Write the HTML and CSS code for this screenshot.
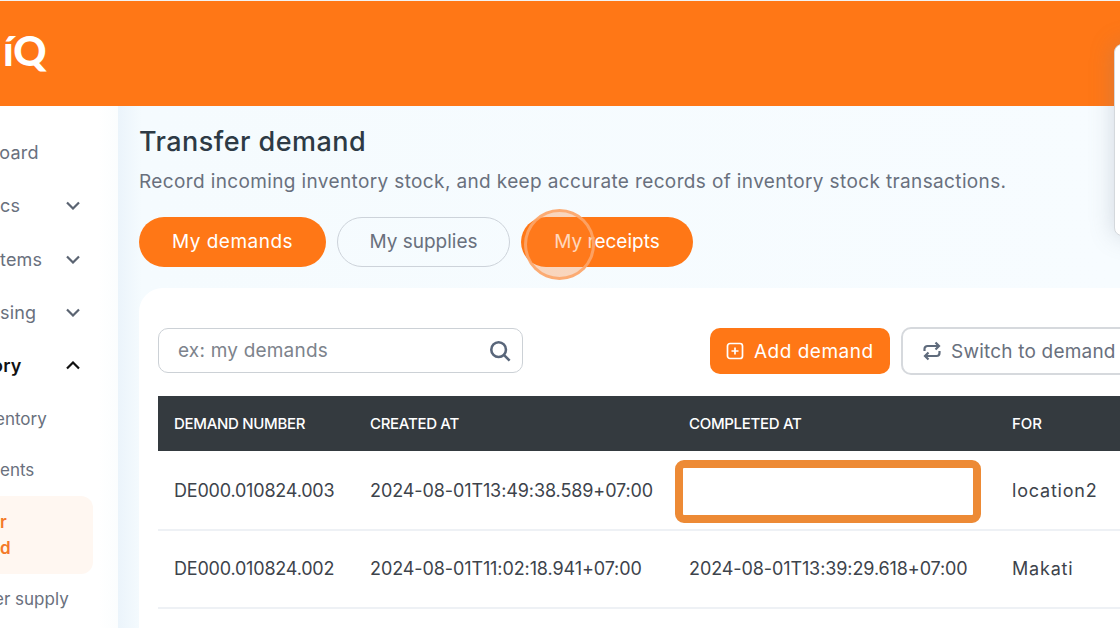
FILE: index.html
```html
<!DOCTYPE html>
<html lang="en">
<head>
<meta charset="utf-8">
<title>Transfer demand</title>
<link rel="stylesheet" href="styles.css">
</head>
<body>
<div class="app">
  <header class="topbar">
    <div class="logo">íQ</div>
  </header>
  <div class="body-row">
    <nav class="sidebar">
      <div class="nav-item"><span class="clip-a">board</span></div>
      <div class="nav-item"><span>cs</span><svg class="chev" viewBox="0 0 14 9"><path d="M1 1.500 7 7.500l6-6"/></svg></div>
      <div class="nav-item"><span>tems</span><svg class="chev" viewBox="0 0 14 9"><path d="M1 1.500 7 7.500l6-6"/></svg></div>
      <div class="nav-item"><span>sing</span><svg class="chev" viewBox="0 0 14 9"><path d="M1 1.500 7 7.500l6-6"/></svg></div>
      <div class="nav-item nav-open"><span class="clip-b">ory</span><svg class="chev" viewBox="0 0 14 9"><path d="M1 7.500 7 1.500l6 6"/></svg></div>
      <div class="sub-item first"><span class="clip-c">entory</span></div>
      <div class="sub-item">ents</div>
      <div class="sub-active">r<br>d</div>
      <div class="sub-item last"><span class="clip-d">er supply</span></div>
    </nav>
    <main class="content">
      <h1 class="title">Transfer demand</h1>
      <p class="subtitle">Record incoming inventory stock, and keep accurate records of inventory stock transactions.</p>
      <div class="tabs">
        <button class="pill pill-on">My demands</button>
        <button class="pill pill-off">My supplies</button>
        <button class="pill pill-on pill-hl">My receipts<span class="ripple"></span></button>
      </div>
      <section class="card">
        <div class="toolbar">
          <div class="search">
            <span class="placeholder">ex: my demands</span>
            <svg class="search-ico" viewBox="0 0 24 24"><circle cx="10.500" cy="10.500" r="8"/><path d="M16.500 16.500l6 6"/></svg>
          </div>
          <div class="actions">
            <button class="btn btn-add"><svg class="ico" viewBox="0 0 18 18"><rect x="1.500" y="1.500" width="15" height="15" rx="2.500"/><path d="M9 5.500v7M5.500 9h7"/></svg>Add demand</button>
            <button class="btn btn-switch"><svg class="ico" viewBox="0 0 20 20"><path d="M2.500 10V8a3 3 0 0 1 3-3h11M13.500 1.500 17 5l-3.500 3.500M17.500 10v2a3 3 0 0 1-3 3h-11M6.500 11.500 3 15l3.500 3.500"/></svg>Switch to demand</button>
          </div>
        </div>
        <div class="table">
          <div class="row head"><div class="c1">DEMAND NUMBER</div><div class="c2">CREATED AT</div><div class="c3">COMPLETED AT</div><div class="c4">FOR</div></div>
          <div class="row"><div class="c1">DE000.010824.003</div><div class="c2">2024-08-01T13:49:38.589+07:00</div><div class="c3"></div><div class="c4">location2</div><span class="highlight"></span></div>
          <div class="row"><div class="c1">DE000.010824.002</div><div class="c2">2024-08-01T11:02:18.941+07:00</div><div class="c3">2024-08-01T13:39:29.618+07:00</div><div class="c4">Makati</div></div>
        </div>
      </section>
    </main>
  </div>
  <div class="popover"></div>
</div>
</body>
</html>
```
FILE: styles.css
```css
* { box-sizing: border-box; }
html, body { margin: 0; padding: 0; }
body { width: 1120px; height: 628px; overflow: hidden; font-family: "Inter", "Open Sans", sans-serif; background: #fff; }
button { font-family: inherit; cursor: pointer; }
.app { position: relative; width: 1120px; height: 628px; overflow: hidden; display: flex; flex-direction: column; }
.topbar { height: 106px; flex: none; background: #ff7716; border-top: 1px solid #f2f2f2; display: flex; align-items: center; }
.logo { color: #fff; font-family: "Lato", sans-serif; font-weight: 900; font-size: 41px; line-height: 1; margin: -6px 0 0 3px; }
.body-row { flex: 1; display: flex; min-height: 0; }
.sidebar { width: 118px; flex: none; background: linear-gradient(90deg, #fff 98px, #fbfdfe 100%); color: #69707d; font-size: 18px; padding-top: 19.600px; }
.nav-item { height: 53.400px; display: flex; align-items: center; justify-content: space-between; padding-right: 38px; letter-spacing: .2px; }
.nav-open { color: #111; font-weight: 600; }
.clip-a { margin-left: -12px; }
.clip-b { margin-left: -8px; }
.clip-c { margin-left: -5px; }
.clip-d { margin-left: -6px; }
.chev { width: 14px; height: 9px; fill: none; stroke: #5b6472; stroke-width: 2.200; }
.nav-open .chev { stroke: #111; }
.sub-item { font-size: 17px; height: 51px; display: flex; align-items: center; }
.sub-item.first { margin-top: 1.400px; }
.sub-active { width: 93px; height: 78px; background: #fff7f1; border-radius: 0 12px 12px 0; color: #f47a2a; font-weight: 600; font-size: 17px; line-height: 26px; padding-top: 13px; }
.sub-item.last { height: 50px; }
.content { flex: 1; min-width: 0; background: linear-gradient(90deg, #ebf4fb 0, #f5fbfe 24px, #f7fcff 100%); padding: 20px 0 0 21px; }
.title { margin: 0; font-size: 27px; line-height: 32px; font-weight: 500; color: #2d3a45; letter-spacing: .45px; }
.subtitle { margin: 11px 0 0; font-size: 19px; line-height: 26px; color: #69707d; white-space: nowrap; letter-spacing: .37px; }
.tabs { display: flex; gap: 11px; margin-top: 22px; }
.pill { height: 50px; border-radius: 25px; font-size: 19px; border: 1px solid transparent; padding: 0 0 2px; position: relative; letter-spacing: .5px; }
.pill-on { background: #ff7716; color: #fff; width: 187px; }
.pill-off { background: transparent; border-color: #cdd3da; color: #69707d; width: 173px; letter-spacing: 0; }
.pill-hl { width: 172px; letter-spacing: 0; }
.ripple { position: absolute; left: 2px; top: -9px; width: 71px; height: 71px; border-radius: 50%; background: rgba(255, 125, 40, .3); border: 3px solid rgba(252, 166, 106, .9); }
.card { margin-top: 21px; background: #fff; border-radius: 24px 0 0 0; height: 340px; padding: 39px 0 0 19px; }
.toolbar { display: flex; align-items: flex-start; }
.search { width: 365px; height: 45px; flex: none; margin-top: 1px; border: 1px solid #ccd1d6; border-radius: 10px; display: flex; align-items: center; justify-content: space-between; padding: 0 11px 0 19px; }
.placeholder { font-size: 19px; color: #7d838c; letter-spacing: .2px; }
.search-ico { width: 22px; height: 22px; fill: none; stroke: #59667a; stroke-width: 2.800; }
.actions { display: flex; align-items: center; gap: 11px; margin-left: 187px; flex: none; }
.btn { border-radius: 10px; font-size: 19px; display: flex; align-items: center; white-space: nowrap; flex: none; }
.btn-add { width: 180px; height: 46px; background: #ff7716; color: #fff; border: 0; padding: 0 0 0 16px; gap: 10px; letter-spacing: .5px; }
.btn-switch { width: 240px; height: 48px; background: #fff; color: #69707d; border: 2px solid #d6d9dd; padding: 0 0 0 19px; gap: 9px; letter-spacing: .2px; }
.ico { width: 18px; height: 18px; fill: none; stroke: currentColor; stroke-width: 1.700; flex: none; }
.btn-switch .ico { width: 20px; height: 20px; stroke: #5f6b7c; stroke-width: 2.200; }
.table { margin-top: 21px; width: 970px; }
.row { position: relative; display: flex; align-items: center; height: 78px; border-bottom: 2px solid #eef1f5; font-size: 18px; color: #3d434b; letter-spacing: -.1px; }
.head + .row { height: 79.500px; padding-top: 1px; }
.row.head { height: 55px; background: #343a3f; color: #fff; font-size: 15px; font-weight: 500; border-bottom: 0; letter-spacing: -.3px; }
.c1 { width: 196px; padding-left: 16px; flex: none; letter-spacing: -.2px; }
.c2 { width: 319px; padding-left: 16px; flex: none; white-space: nowrap; }
.c3 { width: 323px; padding-left: 16px; flex: none; white-space: nowrap; }
.c4 { flex: 1; padding-left: 16px; letter-spacing: .8px; }
.row.head .c1 { letter-spacing: -.3px; }
.row.head .c4 { letter-spacing: 0; }
.highlight { position: absolute; left: 517px; top: 9px; width: 306px; height: 63px; border: 8px solid #ed8a35; border-radius: 9px; }
.popover { position: absolute; right: -40px; top: 44px; width: 46px; height: 192px; background: #fff; border: 1px solid #d4d8dc; border-radius: 8px; box-shadow: 0 0 24px rgba(120, 130, 150, .3); }
```
